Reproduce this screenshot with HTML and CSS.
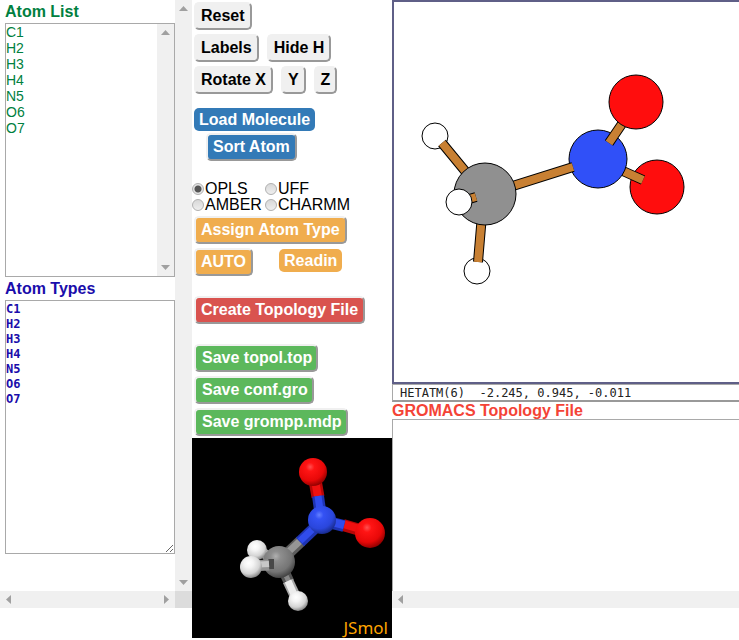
FILE: index.html
```html
<!DOCTYPE html>
<html lang="en">
<head>
<meta charset="utf-8">
<title>Topology builder</title>
<link rel="stylesheet" href="styles.css">
</head>
<body>
<main class="layout">
  <section class="frame frame-left">
    <div class="pane">
      <label class="title green" for="atoms">Atom List</label>
      <div class="listbox">
        <select id="atoms" class="atoms" size="15">
          <option>C1</option><option>H2</option><option>H3</option><option>H4</option><option>N5</option><option>O6</option><option>O7</option>
        </select>
        <div class="bar-v"><i class="arrow up"></i><i class="arrow down"></i></div>
      </div>
      <label class="title navy" for="types">Atom Types</label>
      <textarea id="types" class="types" spellcheck="false">C1
H2
H3
H4
N5
O6
O7</textarea>
    </div>
    <div class="bar-v"><i class="arrow up"></i><i class="arrow down"></i></div>
    <div class="bar-h"><i class="arrow left"></i><i class="arrow right"></i></div>
    <div class="corner"></div>
  </section>

  <section class="tools">
    <div class="controls">
      <div class="row"><button class="btn plain">Reset</button></div>
      <div class="row"><button class="btn plain">Labels</button><button class="btn plain">Hide H</button></div>
      <div class="row"><button class="btn plain">Rotate X</button><button class="btn plain">Y</button><button class="btn plain">Z</button></div>
      <div class="molecule">
        <button class="btn flat blue">Load Molecule</button>
        <button class="btn blue sort">Sort Atom</button>
      </div>
      <div class="fields">
        <label><input type="radio" name="ff" checked>OPLS</label>
        <label><input type="radio" name="ff">UFF</label>
        <label><input type="radio" name="ff">AMBER</label>
        <label><input type="radio" name="ff">CHARMM</label>
      </div>
      <div class="row"><button class="btn orange">Assign Atom Type</button></div>
      <div class="row spread"><button class="btn orange">AUTO</button><button class="btn flat orange">Readin</button></div>
      <div class="row create"><button class="btn red">Create Topology File</button></div>
      <div class="row"><button class="btn save">Save topol.top</button></div>
      <div class="row"><button class="btn save">Save conf.gro</button></div>
      <div class="row"><button class="btn save">Save grompp.mdp</button></div>
    </div>
    <svg class="model" viewBox="192 438 200 200" role="img" aria-label="3D model">
      <defs>
        <radialGradient id="gr" cx=".4" cy=".32" r=".7"><stop offset="0" stop-color="#ff5050"/><stop offset=".22" stop-color="#ff1414"/><stop offset=".7" stop-color="#e80808"/><stop offset="1" stop-color="#8e0000"/></radialGradient>
        <radialGradient id="gb" cx=".4" cy=".32" r=".7"><stop offset="0" stop-color="#6480ff"/><stop offset=".22" stop-color="#3452f4"/><stop offset=".7" stop-color="#2a46dc"/><stop offset="1" stop-color="#182a8a"/></radialGradient>
        <radialGradient id="gc" cx=".4" cy=".32" r=".7"><stop offset="0" stop-color="#b0b0b0"/><stop offset=".22" stop-color="#8e8e8e"/><stop offset=".7" stop-color="#757575"/><stop offset="1" stop-color="#404040"/></radialGradient>
        <radialGradient id="gh" cx=".4" cy=".32" r=".7"><stop offset="0" stop-color="#fff"/><stop offset=".3" stop-color="#f4f4f4"/><stop offset=".7" stop-color="#d4d4d4"/><stop offset="1" stop-color="#808080"/></radialGradient>
      </defs>
      <rect x="192" y="438" width="200" height="200"/>
      <g fill="none">
        <path d="M315 480L318 497" stroke="#b80606" stroke-width="13"/><path d="M315 480L318 497" stroke="#f01010" stroke-width="8"/>
        <path d="M318 496L320 510" stroke="#1e34b4" stroke-width="12"/><path d="M318 496L320 510" stroke="#304cec" stroke-width="7"/>
        <path d="M343 525L360 530" stroke="#b80606" stroke-width="12"/><path d="M343 524L360 529" stroke="#f01010" stroke-width="8"/>
        <path d="M328 522L344 526" stroke="#1e34b4" stroke-width="12"/><path d="M328 521L344 525" stroke="#304cec" stroke-width="8"/>
        <path d="M284 557L301 541" stroke="#5c5c5c" stroke-width="12"/><path d="M284 556L300 541" stroke="#969696" stroke-width="7"/>
        <path d="M300 542L322 521" stroke="#1e34b4" stroke-width="12"/><path d="M300 541L321 521" stroke="#304cec" stroke-width="7"/>
        <path d="M281 565L289 582" stroke="#545454" stroke-width="11"/><path d="M281 565L289 582" stroke="#888" stroke-width="5"/>
        <path d="M288 581L297 600" stroke="#a8a8a8" stroke-width="11"/><path d="M288 581L296 599" stroke="#ececec" stroke-width="7"/>
        <path d="M257 549L268 556" stroke="#a8a8a8" stroke-width="10"/><path d="M257 548L268 555" stroke="#e4e4e4" stroke-width="6"/>
      </g>
      <circle cx="257" cy="550" r="10" fill="url(#gh)"/>
      <circle cx="279" cy="562" r="16" fill="url(#gc)"/>
      <path d="M268 564L274 564" stroke="#484848" stroke-width="10"/>
      <path d="M251 566L269 565" stroke="#949494" stroke-width="11"/><path d="M251 565L269 564" stroke="#c8c8c8" stroke-width="6"/>
      <circle cx="251" cy="567" r="11" fill="url(#gh)"/>
      <circle cx="298" cy="601" r="10" fill="url(#gh)"/>
      <circle cx="322" cy="520" r="14" fill="url(#gb)"/>
      <circle cx="313" cy="472" r="14" fill="url(#gr)"/>
      <circle cx="370" cy="533" r="15" fill="url(#gr)"/>
      <text class="brand" x="388" y="634" text-anchor="end">JSmol</text>
    </svg>
  </section>

  <section class="frame-right">
    <div class="viewer">
      <svg class="sketch" viewBox="394 2 345 381" role="img" aria-label="2D sketch">
        <g stroke="#000">
          <circle cx="435" cy="136" r="13" fill="#fff"/>
          <circle cx="477" cy="271" r="13" fill="#fff"/>
          <circle cx="657" cy="187" r="27" fill="#ff0d0d"/>
        </g>
        <path class="edge" d="M442 143L470 177M478 262L482 215M643 180L605 163"/>
        <path class="bond" d="M442 143L470 177M478 262L482 215M643 180L605 163"/>
        <circle cx="598" cy="159" r="29" fill="#3050f8" stroke="#000"/>
        <path class="edge" d="M573 167L500 190M609 143L626 118"/>
        <path class="bond" d="M573 167L500 190M609 143L626 118"/>
        <circle cx="636" cy="102" r="27" fill="#ff0d0d" stroke="#000"/>
        <circle cx="485" cy="194" r="31" fill="#909090" stroke="#000"/>
        <path class="edge" d="M459 202L476 197"/><path class="bond" d="M459 202L476 197"/>
        <circle cx="459" cy="202" r="13" fill="#fff" stroke="#000"/>
      </svg>
    </div>
    <input class="status" aria-label="Picked atom" value="HETATM(6)&nbsp; -2.245, 0.945, -0.011">
    <label class="title tomato" for="topology">GROMACS Topology File</label>
    <textarea id="topology" class="topology"></textarea>
    <div class="bar-h"><i class="arrow left"></i></div>
  </section>
</main>
</body>
</html>
```
FILE: styles.css
```css
* { box-sizing: border-box; }
body {
  margin: 0;
  background: #fff;
  font: 16px/16px "Liberation Sans", Arial, sans-serif;
  overflow: hidden;
}
.layout {
  display: grid;
  grid-template-columns: 192px 200px 1fr;
  align-items: start;
}

/* Scrolling frames */
.frame-left {
  display: grid;
  grid-template-columns: 1fr 17px;
}
.pane {
  display: flex;
  flex-direction: column;
  padding: 0 0 37px 5px;
}
.bar-v, .bar-h {
  display: flex;
  justify-content: space-between;
  align-items: center;
  background: #f0f0f0;
}
.bar-v { flex-direction: column; width: 17px; padding: 6px 0; }
.bar-h { height: 17px; padding: 0 6px; }
.corner { background: #dcdcdc; }
.arrow { background: #a0a0a0; width: 9px; height: 5px; }
.up { clip-path: polygon(50% 0, 100% 100%, 0 100%); }
.down { clip-path: polygon(0 0, 100% 0, 50% 100%); }
.left, .right { width: 5px; height: 9px; }
.left { clip-path: polygon(0 50%, 100% 0, 100% 100%); }
.right { clip-path: polygon(0 0, 100% 50%, 0 100%); }

.title { font-weight: bold; line-height: 23px; }
.green { color: #008040; }
.navy { color: #1a0dab; }
.tomato { color: #f44336; line-height: 17px; }

.listbox {
  display: flex;
  height: 254px;
  border: 1px solid #a9a9a9;
}
.atoms {
  flex: 1;
  min-width: 0;
  border: 0;
  padding: 0;
  outline: 0;
  overflow: hidden;
  background: #fff;
  font: 14px/16px "Liberation Sans", Arial, sans-serif;
}
.atoms option { padding: 0; min-height: 16px; color: #008040; }
textarea {
  display: block;
  margin: 0;
  border: 1px solid #a9a9a9;
  border-radius: 0;
  outline: 0;
  background: #fff;
}
.types {
  height: 254px;
  padding: 1px 0;
  color: #1a0dab;
  font: bold 12px/15px "DejaVu Sans Mono", monospace;
}

/* Buttons */
.controls { height: 438px; padding: 2px 0 0 2px; }
.row { display: flex; align-items: flex-start; gap: 8px; height: 32px; }
.btn {
  height: 28px;
  padding: 0 5px;
  border: 2px solid;
  border-color: #f0f0f0 #999 #999 #f0f0f0;
  border-radius: 5px;
  color: #fff;
  font: bold 16px/22px "Liberation Sans", Arial, sans-serif;
  white-space: nowrap;
}
.plain { background: #f0f0f0; color: #000; }
.blue { background: #337ab7; }
.orange { background: #f0ad4e; }
.red { background: #d9534f; }
.save { background: #5cb85c; padding: 0 4px 0 6px; }
.flat { height: 23px; border: 0; }
.molecule {
  display: flex;
  flex-direction: column;
  align-items: flex-start;
  gap: 2px;
  margin-top: 10px;
  height: 73px;
}
.sort { margin-left: 12px; }
.spread { gap: 26px; }
.spread .flat { margin-top: 1px; }
.create { margin-top: 16px; margin-bottom: 16px; }

.fields {
  display: grid;
  grid-template-columns: 73px 1fr;
  margin: 0 0 3px -2px;
}
.fields label { display: flex; align-items: center; gap: 1px; }
.fields input {
  appearance: none;
  width: 12px;
  height: 12px;
  margin: 0;
  border: 1px solid #b0b0b0;
  border-radius: 50%;
  background: linear-gradient(#d8d8d8, #eee);
}
.fields input:checked {
  background: radial-gradient(circle, #555 0 3px, #e4e4e4 4px);
}

.model { display: block; width: 200px; height: 200px; }
.brand { fill: #ffa500; font: 17px "Noto Sans", sans-serif; }

/* Sketch and topology */
.frame-right { display: flex; flex-direction: column; min-width: 0; }
.viewer { height: 384px; border: 2px solid #5f5f87; border-right: 0; overflow: hidden; }
.sketch { display: block; width: 345px; height: 381px; }
.edge, .bond { fill: none; stroke: #000; stroke-width: 10px; }
.bond { stroke: #c88033; stroke-width: 8px; }
.status {
  height: 18px;
  padding: 0 7px;
  border: 1px solid #a9a9a9;
  border-right: 0;
  border-bottom: 2px solid #999;
  border-radius: 0;
  outline: 0;
  color: #222;
  font: 12px/15px "DejaVu Sans Mono", monospace;
}
.topology {
  height: 172px;
  border-right: 0;
  border-bottom: 0;
  resize: none;
}
```
